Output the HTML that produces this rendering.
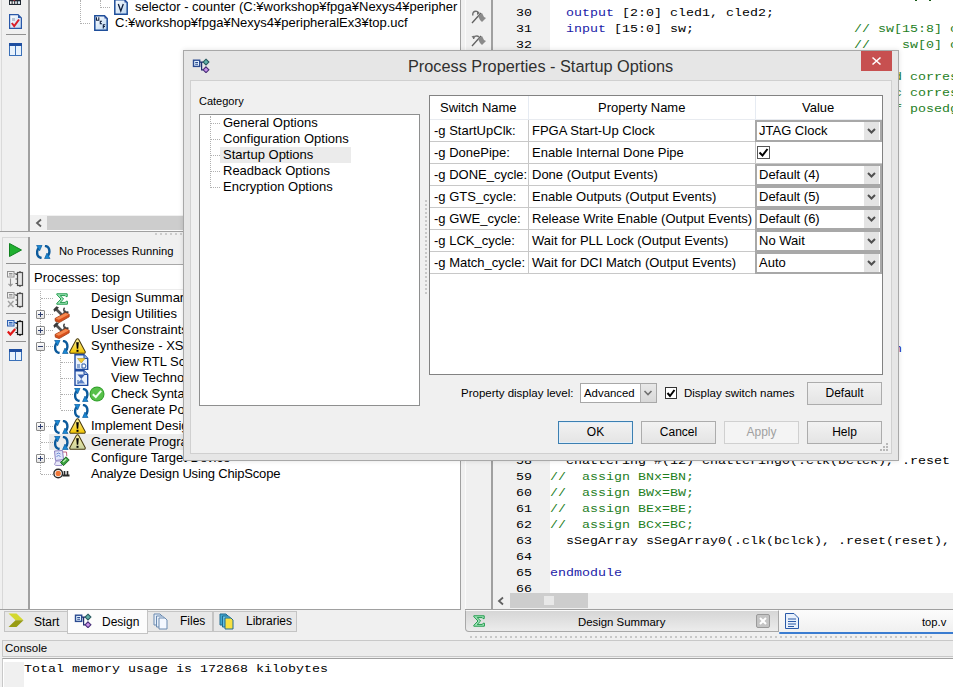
<!DOCTYPE html>
<html><head><meta charset="utf-8">
<style>
*{margin:0;padding:0;box-sizing:border-box}
html,body{width:953px;height:687px;overflow:hidden;background:#f0f0f0;font-family:"Liberation Sans",sans-serif;font-size:13px;color:#000}
.a{position:absolute}
.t{position:absolute;white-space:nowrap;line-height:16px}
.m{position:absolute;white-space:pre;font-family:"Liberation Mono",monospace;font-size:13.33px;line-height:16px;transform:scaleY(0.86);transform-origin:0 11.6px}
.g{color:#1e7e1e}
.k{color:#1c1ca8}
</style></head><body>

<div class="a" style="left:0px;top:0px;width:461px;height:232px;background:#f0f0f0"></div>
<div class="a" style="left:1px;top:0px;width:1px;height:232px;background:#dadada"></div>
<div class="a" style="left:28px;top:0px;width:2px;height:231px;background:#a0a0a0"></div>
<div class="a" style="left:30px;top:0px;width:430px;height:215px;background:#fff"></div>
<div class="a" style="left:460px;top:0px;width:1px;height:610px;background:#a0a0a0"></div>
<div class="a" style="left:30px;top:215px;width:430px;height:16px;background:#f0f0f0"></div>
<div class="a" style="left:47px;top:216px;width:413px;height:15px;background:#cdcdcd"></div>
<svg class="a" style="left:34px;top:218px" width="10" height="10" viewBox="0 0 10 10"><path d="M7 1.5 L3 5 L7 8.5" fill="none" stroke="#606060" stroke-width="1.8"/></svg>
<div class="a" style="left:0px;top:231px;width:461px;height:1px;background:#a0a0a0"></div>
<svg class="a" style="left:9px;top:0px" width="12" height="5" viewBox="0 0 12 5"><rect x="0" y="0" width="12" height="5" fill="#1e2630"/><rect x="1" y="1.3" width="1.6" height="2.6" fill="#f4f4f4"/><rect x="3.6" y="1.3" width="1.6" height="2.6" fill="#f4f4f4"/><rect x="6.2" y="1.3" width="1.6" height="2.6" fill="#f4f4f4"/><rect x="8.8" y="1.3" width="2.2" height="2.6" fill="#d8ecfa"/><rect x="4.5" y="0" width="1.5" height="1" fill="#a02030"/></svg>
<svg class="a" style="left:9px;top:14px" width="13" height="15" viewBox="0 0 13 15"><defs><linearGradient id="dc" x1="0" y1="0" x2="1" y2="1"><stop offset="0" stop-color="#ffffff"/><stop offset="1" stop-color="#c0d8f4"/></linearGradient></defs><path d="M0.6 0.6 L9 0.6 L12.4 4 L12.4 14.4 L0.6 14.4 Z" fill="url(#dc)" stroke="#2a58a8" stroke-width="1.2"/><path d="M9 0.6 L12.4 4 L9 4 Z" fill="#2a58a8"/><rect x="3" y="4" width="3" height="3" fill="#b8c4d4"/><path d="M2.8 9 L5.2 12 L10 5.5" fill="none" stroke="#d81e2a" stroke-width="2"/></svg>
<div class="a" style="left:6px;top:34px;width:20px;height:1px;background:#909090"></div>
<svg class="a" style="left:9px;top:43px" width="13" height="13" viewBox="0 0 13 13"><rect x="0.5" y="0.5" width="12" height="12" fill="#e8f2fc" stroke="#3a70b8"/><rect x="0" y="0" width="13" height="3" fill="#1e4ea0"/><rect x="6" y="3" width="1" height="10" fill="#3a70b8"/></svg>
<div class="a" style="left:80px;top:0px;width:1px;height:24px;border-left:1px dotted #b0b0b0"></div>
<div class="a" style="left:80px;top:23px;width:10px;height:1px;border-top:1px dotted #b0b0b0"></div>
<div class="a" style="left:100px;top:0px;width:1px;height:8px;border-left:1px dotted #b0b0b0"></div>
<div class="a" style="left:100px;top:7px;width:10px;height:1px;border-top:1px dotted #b0b0b0"></div>
<svg class="a" style="left:114px;top:-1px" width="14" height="16" viewBox="0 0 14 16"><defs><linearGradient id="dg" x1="0" y1="0" x2="1" y2="1"><stop offset="0" stop-color="#ffffff"/><stop offset="1" stop-color="#b8d4f0"/></linearGradient></defs><path d="M0.8 0.8 L10.5 0.8 L13.2 3.5 L13.2 15.2 L0.8 15.2 Z" fill="url(#dg)" stroke="#1e4e9a" stroke-width="1.5"/><path d="M10.5 0.8 L13.2 3.5 L10.5 3.5 Z" fill="#3050a0"/><path d="M4.3 5 L6.8 12 L9.3 5" fill="none" stroke="#102040" stroke-width="1.3"/></svg>
<svg class="a" style="left:94px;top:15px" width="14" height="16" viewBox="0 0 14 16"><path d="M0.8 0.8 L10.5 0.8 L13.2 3.5 L13.2 15.2 L0.8 15.2 Z" fill="url(#dg)" stroke="#1e4e9a" stroke-width="1.5"/><path d="M10.5 0.8 L13.2 3.5 L10.5 3.5 Z" fill="#3050a0"/><path d="M2.5 2.3 V5.3 H4.8 V2.3 M8 6.2 H6.3 V8.8 H8 M11.3 9.8 H9.3 V13.5 M9.3 11.5 H11" fill="none" stroke="#102040" stroke-width="1.1"/></svg>
<div class="t" style="left:135px;top:-1px;">selector - counter (C:¥workshop¥fpga¥Nexys4¥peripher</div>
<div class="t" style="left:115px;top:15px;">C:¥workshop¥fpga¥Nexys4¥peripheralEx3¥top.ucf</div>
<div class="a" style="left:460px;top:0px;width:1px;height:232px;background:#a0a0a0"></div>
<div class="a" style="left:2px;top:237px;width:27px;height:372px;background:#f0f0f0;border-left:1px solid #d8d8d8;border-top:1px solid #d8d8d8"></div>
<div class="a" style="left:28px;top:237px;width:2px;height:372px;background:#a0a0a0"></div>
<div class="a" style="left:30px;top:237px;width:430px;height:28px;background:#f0f0f0;border-bottom:1px solid #a8a8a8"></div>
<div class="a" style="left:30px;top:230px;width:430px;height:1px;background:#fafafa"></div>
<div class="a" style="left:155px;top:233px;width:2px;height:2px;background:#cccccc"></div>
<div class="a" style="left:160px;top:233px;width:2px;height:2px;background:#cccccc"></div>
<div class="a" style="left:165px;top:233px;width:2px;height:2px;background:#cccccc"></div>
<div class="a" style="left:170px;top:233px;width:2px;height:2px;background:#cccccc"></div>
<div class="a" style="left:175px;top:233px;width:2px;height:2px;background:#cccccc"></div>
<div class="a" style="left:180px;top:233px;width:2px;height:2px;background:#cccccc"></div>
<div class="a" style="left:185px;top:233px;width:2px;height:2px;background:#cccccc"></div>
<div class="a" style="left:190px;top:233px;width:2px;height:2px;background:#cccccc"></div>
<div class="a" style="left:195px;top:233px;width:2px;height:2px;background:#cccccc"></div>
<div class="a" style="left:200px;top:233px;width:2px;height:2px;background:#cccccc"></div>
<div class="a" style="left:205px;top:233px;width:2px;height:2px;background:#cccccc"></div>
<div class="a" style="left:210px;top:233px;width:2px;height:2px;background:#cccccc"></div>
<div class="a" style="left:30px;top:265px;width:430px;height:344px;background:#fff"></div>
<div class="a" style="left:0px;top:609px;width:461px;height:1px;background:#a0a0a0"></div>
<svg class="a" style="left:36px;top:245px" width="15" height="14" viewBox="0 0 15 14"><path d="M5.6 13 Q0.9 12.3 1.1 7 Q1.3 4.2 2.8 3" fill="none" stroke="#0c5a9c" stroke-width="2.4"/><path d="M0.6 0.3 L6 0.3 L3.6 5.8 Z" fill="#1a88d4" stroke="#0c5a9c" stroke-width="0.7"/><path d="M8.9 0.9 Q13.6 1.6 13.4 6.8 Q13.2 9.6 11.8 10.8" fill="none" stroke="#0c5a9c" stroke-width="2.4"/><path d="M14 13.6 L8.6 13.6 L11 8.1 Z" fill="#1a88d4" stroke="#0c5a9c" stroke-width="0.7"/></svg>
<div class="t" style="left:59px;top:242px;font-size:11.2px;line-height:18px">No Processes Running</div>
<div class="t" style="left:34px;top:270px;">Processes: top</div>
<div class="a" style="left:30px;top:289px;width:430px;height:1px;background:#ececec"></div>
<svg class="a" style="left:9px;top:243px" width="13" height="14" viewBox="0 0 13 14"><path d="M0.5 0.5 L12.5 7 L0.5 13.5 Z" fill="#20b030" stroke="#108020"/></svg>
<div class="a" style="left:6px;top:263px;width:20px;height:1px;background:#909090"></div>
<div class="a" style="left:6px;top:313px;width:20px;height:1px;background:#909090"></div>
<div class="a" style="left:6px;top:341px;width:20px;height:1px;background:#909090"></div>
<svg class="a" style="left:7px;top:271px" width="17" height="16" viewBox="0 0 17 16"><rect x="0.5" y="0.5" width="6.5" height="5.5" fill="#f0f0f0" stroke="#909090"/><path d="M2 2.5h3.5M2 4h3.5M7 2.5h3" stroke="#909090"/><rect x="10.5" y="1.5" width="5" height="13" fill="#e6e6e6" stroke="#505050" stroke-width="1.2"/><path d="M8.5 3.5h2M8.5 8h2M8.5 12.5h2M13 0v1.5M13 14.5v1.5" stroke="#505050" stroke-width="1.2"/><path d="M3.5 7.5v7.5M1.5 12.8l2 2.2 2-2.2" fill="none" stroke="#909090" stroke-width="1.1"/></svg>
<svg class="a" style="left:7px;top:292px" width="17" height="16" viewBox="0 0 17 16"><rect x="0.5" y="0.5" width="6.5" height="5.5" fill="#f0f0f0" stroke="#909090"/><path d="M2 2.5h3.5M2 4h3.5M7 2.5h3" stroke="#909090"/><rect x="10.5" y="1.5" width="5" height="13" fill="#e6e6e6" stroke="#505050" stroke-width="1.2"/><path d="M8.5 3.5h2M8.5 8h2M8.5 12.5h2M13 0v1.5M13 14.5v1.5" stroke="#505050" stroke-width="1.2"/><path d="M1 9l5.5 6M6.5 9l-5.5 6" fill="none" stroke="#a0a0a0" stroke-width="1.4"/></svg>
<svg class="a" style="left:7px;top:320px" width="17" height="16" viewBox="0 0 17 16"><rect x="0.5" y="0.5" width="6.5" height="5.5" fill="#cfe0f8" stroke="#2f60b0"/><path d="M2 2.5h3.5M2 4h3.5M7 2.5h3" stroke="#2f60b0"/><rect x="10.5" y="1.5" width="5" height="13" fill="#e6e6e6" stroke="#1a1a1a" stroke-width="1.2"/><path d="M8.5 3.5h2M8.5 8h2M8.5 12.5h2M13 0v1.5M13 14.5v1.5" stroke="#1a1a1a" stroke-width="1.2"/><path d="M0.8 11.5l2.6 3 4.8-5.5" fill="none" stroke="#e01818" stroke-width="2.2"/></svg>
<svg class="a" style="left:9px;top:349px" width="13" height="12" viewBox="0 0 13 12"><rect x="0.5" y="0.5" width="12" height="11" fill="#e8f2fc" stroke="#3a70b8"/><rect x="0" y="0" width="13" height="3" fill="#1e4ea0"/><rect x="6" y="3" width="1" height="9" fill="#3a70b8"/></svg>
<div class="a" style="left:49px;top:434px;width:134px;height:16px;background:#ececec"></div>
<div class="a" style="left:40px;top:291px;width:1px;height:183px;border-left:1px dotted #b0b0b0"></div>
<div class="a" style="left:60px;top:356px;width:1px;height:53px;border-left:1px dotted #b0b0b0"></div>
<div class="a" style="left:41px;top:298px;width:12px;height:1px;border-top:1px dotted #b0b0b0"></div>
<div class="t" style="left:91px;top:290px;">Design Summary</div>
<div class="a" style="left:41px;top:314px;width:12px;height:1px;border-top:1px dotted #b0b0b0"></div>
<div class="a" style="left:36px;top:310px;width:9px;height:9px;background:linear-gradient(#fdfdfd,#e4e4e4);border:1px solid #8a8a8a;border-radius:1px"></div>
<div class="a" style="left:38px;top:314px;width:5px;height:1px;background:#304070"></div>
<div class="a" style="left:40px;top:312px;width:1px;height:5px;background:#304070"></div>
<div class="t" style="left:91px;top:306px;">Design Utilities</div>
<div class="a" style="left:41px;top:330px;width:12px;height:1px;border-top:1px dotted #b0b0b0"></div>
<div class="a" style="left:36px;top:326px;width:9px;height:9px;background:linear-gradient(#fdfdfd,#e4e4e4);border:1px solid #8a8a8a;border-radius:1px"></div>
<div class="a" style="left:38px;top:330px;width:5px;height:1px;background:#304070"></div>
<div class="a" style="left:40px;top:328px;width:1px;height:5px;background:#304070"></div>
<div class="t" style="left:91px;top:322px;">User Constraints</div>
<div class="a" style="left:41px;top:346px;width:12px;height:1px;border-top:1px dotted #b0b0b0"></div>
<div class="a" style="left:36px;top:342px;width:9px;height:9px;background:linear-gradient(#fdfdfd,#e4e4e4);border:1px solid #8a8a8a;border-radius:1px"></div>
<div class="a" style="left:38px;top:346px;width:5px;height:1px;background:#304070"></div>
<div class="t" style="left:91px;top:338px;">Synthesize - XST</div>
<div class="a" style="left:61px;top:362px;width:12px;height:1px;border-top:1px dotted #b0b0b0"></div>
<div class="t" style="left:111px;top:354px;">View RTL Schematic</div>
<div class="a" style="left:61px;top:378px;width:12px;height:1px;border-top:1px dotted #b0b0b0"></div>
<div class="t" style="left:111px;top:370px;">View Technology Schematic</div>
<div class="a" style="left:61px;top:394px;width:12px;height:1px;border-top:1px dotted #b0b0b0"></div>
<div class="t" style="left:111px;top:386px;">Check Syntax</div>
<div class="a" style="left:61px;top:410px;width:12px;height:1px;border-top:1px dotted #b0b0b0"></div>
<div class="t" style="left:111px;top:402px;">Generate Post-Synthesis Simulation Model</div>
<div class="a" style="left:41px;top:426px;width:12px;height:1px;border-top:1px dotted #b0b0b0"></div>
<div class="a" style="left:36px;top:422px;width:9px;height:9px;background:linear-gradient(#fdfdfd,#e4e4e4);border:1px solid #8a8a8a;border-radius:1px"></div>
<div class="a" style="left:38px;top:426px;width:5px;height:1px;background:#304070"></div>
<div class="a" style="left:40px;top:424px;width:1px;height:5px;background:#304070"></div>
<div class="t" style="left:91px;top:418px;">Implement Design</div>
<div class="a" style="left:41px;top:442px;width:12px;height:1px;border-top:1px dotted #b0b0b0"></div>
<div class="t" style="left:91px;top:434px;">Generate Programming File</div>
<div class="a" style="left:41px;top:458px;width:12px;height:1px;border-top:1px dotted #b0b0b0"></div>
<div class="a" style="left:36px;top:454px;width:9px;height:9px;background:linear-gradient(#fdfdfd,#e4e4e4);border:1px solid #8a8a8a;border-radius:1px"></div>
<div class="a" style="left:38px;top:458px;width:5px;height:1px;background:#304070"></div>
<div class="a" style="left:40px;top:456px;width:1px;height:5px;background:#304070"></div>
<div class="t" style="left:91px;top:450px;">Configure Target Device</div>
<div class="a" style="left:41px;top:474px;width:12px;height:1px;border-top:1px dotted #b0b0b0"></div>
<div class="t" style="left:91px;top:466px;letter-spacing:-0.17px">Analyze Design Using ChipScope</div>
<svg class="a" style="left:56px;top:293px" width="12" height="12" viewBox="0 0 12 12"><path d="M0.8 0.8 L11.2 0.8 L11.2 3.6 L10 3.6 L9.2 2.6 L4.2 2.6 L7.6 6 L4.2 9.4 L9.4 9.4 L10.2 8.2 L11.4 8.2 L11.4 11.2 L0.8 11.2 L0.8 10.4 L5 6 L0.8 1.6 Z" fill="#a8e8c0" stroke="#1f9a4a" stroke-width="1"/></svg>
<svg class="a" style="left:53px;top:306px" width="17" height="17" viewBox="0 0 17 17"><path d="M2.5 2.5 L10 10" stroke="#505050" stroke-width="2.6"/><path d="M0.3 3.5 L3.5 0.3 L6 1.5 L1.5 6 Z" fill="#3a3a3a"/><path d="M9.5 9 L13 5" stroke="#585858" stroke-width="2"/><path d="M11.6 1.8 A2.6 2.6 0 1 0 15.4 5.6" fill="none" stroke="#404040" stroke-width="1.6"/><path d="M2 12.5 L12.5 6.8 L16.2 8.2 L16.2 10.8 L6.2 16.6 L2.4 15.2 Z" fill="#d8501c" stroke="#a03a10" stroke-width="0.8"/><path d="M2.6 12.4 L12.5 7 L15.8 8.4 L5.8 13.8 Z" fill="#f58a50"/></svg>
<svg class="a" style="left:53px;top:322px" width="17" height="17" viewBox="0 0 17 17"><path d="M2.5 2.5 L10 10" stroke="#505050" stroke-width="2.6"/><path d="M0.3 3.5 L3.5 0.3 L6 1.5 L1.5 6 Z" fill="#3a3a3a"/><path d="M9.5 9 L13 5" stroke="#585858" stroke-width="2"/><path d="M11.6 1.8 A2.6 2.6 0 1 0 15.4 5.6" fill="none" stroke="#404040" stroke-width="1.6"/><path d="M2 12.5 L12.5 6.8 L16.2 8.2 L16.2 10.8 L6.2 16.6 L2.4 15.2 Z" fill="#d8501c" stroke="#a03a10" stroke-width="0.8"/><path d="M2.6 12.4 L12.5 7 L15.8 8.4 L5.8 13.8 Z" fill="#f58a50"/></svg>
<svg class="a" style="left:54px;top:340px" width="15" height="14" viewBox="0 0 15 14"><path d="M5.6 13 Q0.9 12.3 1.1 7 Q1.3 4.2 2.8 3" fill="none" stroke="#0c5a9c" stroke-width="2.4"/><path d="M0.6 0.3 L6 0.3 L3.6 5.8 Z" fill="#1a88d4" stroke="#0c5a9c" stroke-width="0.7"/><path d="M8.9 0.9 Q13.6 1.6 13.4 6.8 Q13.2 9.6 11.8 10.8" fill="none" stroke="#0c5a9c" stroke-width="2.4"/><path d="M14 13.6 L8.6 13.6 L11 8.1 Z" fill="#1a88d4" stroke="#0c5a9c" stroke-width="0.7"/></svg>
<svg class="a" style="left:69px;top:338px" width="17" height="16" viewBox="0 0 17 16"><defs><linearGradient id="wg69338" x1="0" y1="0" x2="0" y2="1"><stop offset="0" stop-color="#fff3a0"/><stop offset="1" stop-color="#f2c400"/></linearGradient></defs><path d="M8.5 0.8 Q9.1 0.6 9.6 1.3 L16.2 13.6 Q16.5 15.2 15 15.2 L2 15.2 Q0.5 15.2 0.8 13.6 L7.4 1.3 Z" fill="url(#wg69338)" stroke="#4a3c10" stroke-width="1.1"/><path d="M7.2 4.2 L9.8 4.2 L9.2 10.8 L7.8 10.8 Z" fill="#000"/><rect x="7.5" y="11.8" width="2" height="2" fill="#000"/></svg>
<svg class="a" style="left:74px;top:354px" width="15" height="16" viewBox="0 0 15 16"><path d="M1 0.8 L10 0.8 L13.7 4.5 L13.7 15.5 L1 15.5 Z" fill="#eaf2fc" stroke="#1e4aa0" stroke-width="1.4"/><path d="M10 0.8 L10 4.5 L13.7 4.5" fill="#9fb8e0" stroke="#1e4aa0"/><path d="M3.5 4.5h7.5l-3.75 4.5z" fill="#f4cc30" stroke="#b09020" stroke-width="0.6"/><path d="M3 11h3M3 13h3M8 10h3l1 2-1 2h-3z" stroke="#2a5aa8" fill="#fff" stroke-width="1"/></svg>
<svg class="a" style="left:74px;top:370px" width="15" height="16" viewBox="0 0 15 16"><path d="M1 0.8 L10 0.8 L13.7 4.5 L13.7 15.5 L1 15.5 Z" fill="#eaf2fc" stroke="#1e4aa0" stroke-width="1.4"/><path d="M10 0.8 L10 4.5 L13.7 4.5" fill="#9fb8e0" stroke="#1e4aa0"/><path d="M3.5 4.5h7.5l-3.75 4.5z" fill="#3a60b0"/><path d="M3.5 13.5h7.5l-3.75-4.5z" fill="#5a80c8"/><path d="M3 11h2M3 13h2" stroke="#2a5aa8"/></svg>
<svg class="a" style="left:74px;top:388px" width="15" height="14" viewBox="0 0 15 14"><path d="M5.6 13 Q0.9 12.3 1.1 7 Q1.3 4.2 2.8 3" fill="none" stroke="#0c5a9c" stroke-width="2.4"/><path d="M0.6 0.3 L6 0.3 L3.6 5.8 Z" fill="#1a88d4" stroke="#0c5a9c" stroke-width="0.7"/><path d="M8.9 0.9 Q13.6 1.6 13.4 6.8 Q13.2 9.6 11.8 10.8" fill="none" stroke="#0c5a9c" stroke-width="2.4"/><path d="M14 13.6 L8.6 13.6 L11 8.1 Z" fill="#1a88d4" stroke="#0c5a9c" stroke-width="0.7"/></svg>
<svg class="a" style="left:89px;top:386px" width="16" height="16" viewBox="0 0 16 16"><circle cx="8" cy="8" r="7.5" fill="#2f9e2a"/><circle cx="8" cy="8" r="6.6" fill="#58c04a"/><path d="M3.8 8.2 L6.8 11 L12.2 4.8" fill="none" stroke="#f0fff0" stroke-width="2"/></svg>
<svg class="a" style="left:74px;top:404px" width="15" height="14" viewBox="0 0 15 14"><path d="M5.6 13 Q0.9 12.3 1.1 7 Q1.3 4.2 2.8 3" fill="none" stroke="#0c5a9c" stroke-width="2.4"/><path d="M0.6 0.3 L6 0.3 L3.6 5.8 Z" fill="#1a88d4" stroke="#0c5a9c" stroke-width="0.7"/><path d="M8.9 0.9 Q13.6 1.6 13.4 6.8 Q13.2 9.6 11.8 10.8" fill="none" stroke="#0c5a9c" stroke-width="2.4"/><path d="M14 13.6 L8.6 13.6 L11 8.1 Z" fill="#1a88d4" stroke="#0c5a9c" stroke-width="0.7"/></svg>
<svg class="a" style="left:54px;top:420px" width="15" height="14" viewBox="0 0 15 14"><path d="M5.6 13 Q0.9 12.3 1.1 7 Q1.3 4.2 2.8 3" fill="none" stroke="#0c5a9c" stroke-width="2.4"/><path d="M0.6 0.3 L6 0.3 L3.6 5.8 Z" fill="#1a88d4" stroke="#0c5a9c" stroke-width="0.7"/><path d="M8.9 0.9 Q13.6 1.6 13.4 6.8 Q13.2 9.6 11.8 10.8" fill="none" stroke="#0c5a9c" stroke-width="2.4"/><path d="M14 13.6 L8.6 13.6 L11 8.1 Z" fill="#1a88d4" stroke="#0c5a9c" stroke-width="0.7"/></svg>
<svg class="a" style="left:69px;top:418px" width="17" height="16" viewBox="0 0 17 16"><defs><linearGradient id="wg69418" x1="0" y1="0" x2="0" y2="1"><stop offset="0" stop-color="#fff3a0"/><stop offset="1" stop-color="#f2c400"/></linearGradient></defs><path d="M8.5 0.8 Q9.1 0.6 9.6 1.3 L16.2 13.6 Q16.5 15.2 15 15.2 L2 15.2 Q0.5 15.2 0.8 13.6 L7.4 1.3 Z" fill="url(#wg69418)" stroke="#4a3c10" stroke-width="1.1"/><path d="M7.2 4.2 L9.8 4.2 L9.2 10.8 L7.8 10.8 Z" fill="#000"/><rect x="7.5" y="11.8" width="2" height="2" fill="#000"/></svg>
<svg class="a" style="left:54px;top:436px" width="15" height="14" viewBox="0 0 15 14"><path d="M5.6 13 Q0.9 12.3 1.1 7 Q1.3 4.2 2.8 3" fill="none" stroke="#0c5a9c" stroke-width="2.4"/><path d="M0.6 0.3 L6 0.3 L3.6 5.8 Z" fill="#1a88d4" stroke="#0c5a9c" stroke-width="0.7"/><path d="M8.9 0.9 Q13.6 1.6 13.4 6.8 Q13.2 9.6 11.8 10.8" fill="none" stroke="#0c5a9c" stroke-width="2.4"/><path d="M14 13.6 L8.6 13.6 L11 8.1 Z" fill="#1a88d4" stroke="#0c5a9c" stroke-width="0.7"/></svg>
<svg class="a" style="left:69px;top:434px" width="17" height="16" viewBox="0 0 17 16"><defs><linearGradient id="wg69434" x1="0" y1="0" x2="0" y2="1"><stop offset="0" stop-color="#fff3a0"/><stop offset="1" stop-color="#c8d0a0"/></linearGradient></defs><path d="M8.5 0.8 Q9.1 0.6 9.6 1.3 L16.2 13.6 Q16.5 15.2 15 15.2 L2 15.2 Q0.5 15.2 0.8 13.6 L7.4 1.3 Z" fill="url(#wg69434)" stroke="#4a3c10" stroke-width="1.1"/><path d="M7.2 4.2 L9.8 4.2 L9.2 10.8 L7.8 10.8 Z" fill="#000"/><rect x="7.5" y="11.8" width="2" height="2" fill="#000"/></svg>
<svg class="a" style="left:53px;top:450px" width="17" height="16" viewBox="0 0 17 16"><path d="M1.5 1 L9.5 0.5 L10.5 9.5 L2.5 10.5 Z" fill="#dfe4fa" stroke="#8a80c0"/><path d="M3.5 4l2-1 2 1M3.5 6.5l2-1 2 1" fill="none" stroke="#6a8ad0"/><path d="M3 11 L1.5 14.5 Q2 15.5 4 15.5 L9 15.5 L8 11 Z" fill="#e8e8f8" stroke="#9a90c8"/><path d="M10 2 L13.5 2 L13.8 6" fill="none" stroke="#c06080"/><path d="M7.5 12.5 L13 6.8 L16.2 10 L10.6 15.6 Z" fill="#3aa040" stroke="#1e6a24"/><path d="M10 12 L13.2 9" stroke="#b8f0b0" stroke-width="1.2"/></svg>
<svg class="a" style="left:53px;top:468px" width="17" height="12" viewBox="0 0 17 12"><circle cx="5.2" cy="5.5" r="4.3" fill="#fff" stroke="#2a2a2a" stroke-width="1.4"/><circle cx="5.2" cy="5.5" r="2.7" fill="#f07838"/><path d="M9.5 7.5h7" stroke="#2a2a2a" stroke-width="2"/><path d="M11.5 3v4M14.5 3v4" stroke="#2a2a2a" stroke-width="1.6"/></svg>
<div class="a" style="left:461px;top:0px;width:492px;height:610px;background:#f0f0f0"></div>
<div class="a" style="left:465px;top:0px;width:1px;height:609px;background:#fafafa"></div>
<div class="a" style="left:491px;top:0px;width:2px;height:609px;background:#a0a0a0"></div>
<div class="a" style="left:493px;top:0px;width:57px;height:593px;background:#f0f0f0"></div>
<div class="a" style="left:550px;top:0px;width:403px;height:593px;background:#fff"></div>
<svg class="a" style="left:471px;top:10px" width="16" height="14" viewBox="0 0 16 14"><path d="M1 13 L10 3" stroke="#606060" stroke-width="1.3"/><path d="M7 6 L11 3 L13 7 L15 8 L11 12 L9 10 Z" fill="#8a8a8a"/><path d="M2 5.5 A3 3 0 0 1 7.5 3" fill="none" stroke="#707070" stroke-width="1.4"/><path d="M6 1 L9 3 L6 5 Z" fill="#707070"/></svg>
<svg class="a" style="left:471px;top:33px" width="16" height="14" viewBox="0 0 16 14"><path d="M1 13 L10 3" stroke="#606060" stroke-width="1.3"/><path d="M7 6 L11 3 L13 7 L15 8 L11 12 L9 10 Z" fill="#8a8a8a"/><path d="M2.5 6 A3.2 3.2 0 0 1 8 4" fill="none" stroke="#707070" stroke-width="1.4"/><path d="M0.5 3.5 L3.5 2.5 L3 6 Z" fill="#707070"/></svg>
<div class="a" style="left:493px;top:593px;width:460px;height:15px;background:#f0f0f0"></div>
<svg class="a" style="left:496px;top:596px" width="10" height="10" viewBox="0 0 10 10"><path d="M7 1.5 L3 5 L7 8.5" fill="none" stroke="#606060" stroke-width="1.8"/></svg>
<div class="a" style="left:510px;top:593px;width:78px;height:15px;background:#cdcdcd"></div>
<div class="a" style="left:544px;top:596px;width:10px;height:9px;background:#e8e8e8"></div>
<div class="m" style="left:508px;top:5px;width:24px;text-align:right">30</div>
<div class="m" style="left:550px;top:5px">  <span class="k">output</span> [2:0] cled1, cled2;</div>
<div class="m" style="left:508px;top:21px;width:24px;text-align:right">31</div>
<div class="m" style="left:550px;top:21px">  <span class="k">input</span> [15:0] sw;                    <span class="g">// sw[15:8] corresponds to</span></div>
<div class="m" style="left:508px;top:37px;width:24px;text-align:right">32</div>
<div class="m" style="left:550px;top:37px">                                      <span class="g">//    sw[0] corresponds</span></div>
<div class="m" style="left:508px;top:53px;width:24px;text-align:right">33</div>
<div class="m" style="left:508px;top:69px;width:24px;text-align:right">34</div>
<div class="m" style="left:550px;top:69px">                                           <span class="g">d corresponds</span></div>
<div class="m" style="left:508px;top:85px;width:24px;text-align:right">35</div>
<div class="m" style="left:550px;top:85px">                                           <span class="g">c corresponds</span></div>
<div class="m" style="left:508px;top:101px;width:24px;text-align:right">36</div>
<div class="m" style="left:550px;top:101px">                                           <span class="g">f posedge</span></div>
<div class="m" style="left:508px;top:117px;width:24px;text-align:right">37</div>
<div class="m" style="left:508px;top:133px;width:24px;text-align:right">38</div>
<div class="m" style="left:508px;top:149px;width:24px;text-align:right">39</div>
<div class="m" style="left:508px;top:165px;width:24px;text-align:right">40</div>
<div class="m" style="left:508px;top:181px;width:24px;text-align:right">41</div>
<div class="m" style="left:508px;top:197px;width:24px;text-align:right">42</div>
<div class="m" style="left:508px;top:213px;width:24px;text-align:right">43</div>
<div class="m" style="left:508px;top:229px;width:24px;text-align:right">44</div>
<div class="m" style="left:508px;top:245px;width:24px;text-align:right">45</div>
<div class="m" style="left:508px;top:261px;width:24px;text-align:right">46</div>
<div class="m" style="left:508px;top:277px;width:24px;text-align:right">47</div>
<div class="m" style="left:508px;top:293px;width:24px;text-align:right">48</div>
<div class="m" style="left:508px;top:309px;width:24px;text-align:right">49</div>
<div class="m" style="left:508px;top:325px;width:24px;text-align:right">50</div>
<div class="m" style="left:508px;top:341px;width:24px;text-align:right">51</div>
<div class="m" style="left:550px;top:341px">                                       <span class="k">begin</span></div>
<div class="m" style="left:508px;top:357px;width:24px;text-align:right">52</div>
<div class="m" style="left:508px;top:373px;width:24px;text-align:right">53</div>
<div class="m" style="left:508px;top:389px;width:24px;text-align:right">54</div>
<div class="m" style="left:508px;top:405px;width:24px;text-align:right">55</div>
<div class="m" style="left:508px;top:421px;width:24px;text-align:right">56</div>
<div class="m" style="left:508px;top:437px;width:24px;text-align:right">57</div>
<div class="m" style="left:508px;top:453px;width:24px;text-align:right">58</div>
<div class="m" style="left:550px;top:453px">  chattering #(12) chattering0(.clk(bclck), .reset</div>
<div class="m" style="left:508px;top:469px;width:24px;text-align:right">59</div>
<div class="m" style="left:550px;top:469px"><span class="g">//  assign BNx=BN;</span></div>
<div class="m" style="left:508px;top:485px;width:24px;text-align:right">60</div>
<div class="m" style="left:550px;top:485px"><span class="g">//  assign BWx=BW;</span></div>
<div class="m" style="left:508px;top:501px;width:24px;text-align:right">61</div>
<div class="m" style="left:550px;top:501px"><span class="g">//  assign BEx=BE;</span></div>
<div class="m" style="left:508px;top:517px;width:24px;text-align:right">62</div>
<div class="m" style="left:550px;top:517px"><span class="g">//  assign BCx=BC;</span></div>
<div class="m" style="left:508px;top:533px;width:24px;text-align:right">63</div>
<div class="m" style="left:550px;top:533px">  sSegArray sSegArray0(.clk(bclck), .reset(reset), .din(x))</div>
<div class="m" style="left:508px;top:549px;width:24px;text-align:right">64</div>
<div class="m" style="left:508px;top:565px;width:24px;text-align:right">65</div>
<div class="m" style="left:550px;top:565px"><span class="k">endmodule</span></div>
<div class="m" style="left:508px;top:581px;width:24px;text-align:right">66</div>
<div class="a" style="left:915px;top:0px;width:2px;height:1px;background:#1a5a1a"></div>
<div class="a" style="left:929px;top:0px;width:2px;height:1px;background:#1a5a1a"></div>
<div class="a" style="left:493px;top:593px;width:460px;height:15px;background:#f0f0f0"></div>
<svg class="a" style="left:496px;top:596px" width="10" height="10" viewBox="0 0 10 10"><path d="M7 1.5 L3 5 L7 8.5" fill="none" stroke="#606060" stroke-width="1.8"/></svg>
<div class="a" style="left:510px;top:593px;width:78px;height:15px;background:#cdcdcd"></div>
<div class="a" style="left:544px;top:596px;width:10px;height:9px;background:#e8e8e8"></div>
<div class="a" style="left:0px;top:609px;width:953px;height:31px;background:#f0f0f0"></div>
<div class="a" style="left:0px;top:609px;width:461px;height:1px;background:#a0a0a0"></div>
<div class="a" style="left:465px;top:609px;width:488px;height:1px;background:#a0a0a0"></div>
<div class="a" style="left:4px;top:611px;width:64px;height:21px;background:#e8e8e8;border:1px solid #c4c4c4"></div>
<div class="a" style="left:67px;top:610px;width:81px;height:24px;background:#fcfcfc;border:1px solid #c4c4c4;border-top:none"></div>
<div class="a" style="left:147px;top:611px;width:66px;height:21px;background:#e8e8e8;border:1px solid #c4c4c4"></div>
<div class="a" style="left:213px;top:611px;width:84px;height:21px;background:#e8e8e8;border:1px solid #c4c4c4"></div>
<svg class="a" style="left:8px;top:613px" width="17" height="15" viewBox="0 0 17 15"><path d="M0.5 0.5 L8.5 0.5 L15.5 7.2 L7.5 7.2 Z" fill="#d4d830"/><path d="M7.5 7.2 L15.5 7.2 L8.5 14 L0.5 14 Z" fill="#989c14"/></svg>
<div class="t" style="left:34px;top:614px;font-size:12px">Start</div>
<svg class="a" style="left:74px;top:613px" width="18" height="15" viewBox="0 0 18 15"><rect x="1.5" y="2.2" width="6.2" height="6.2" fill="#e0f0fe" stroke="#2a4a90" stroke-width="1.4"/><path d="M3.2 4.5h2.8M3.2 6.3h2.8" stroke="#2a4a90" stroke-width="1.1"/><path d="M7.8 4.2 H11.5 M9.6 4.2 V11.8 H11.5" fill="none" stroke="#203070" stroke-width="1.2"/><path d="M14 1.2 L16.9 4.1 L14 7 L11.1 4.1 Z" fill="#60b0a8" stroke="#2a5a60" stroke-width="1.1"/><path d="M14 8.9 L16.9 11.8 L14 14.7 L11.1 11.8 Z" fill="#c890e8" stroke="#483078" stroke-width="1.1"/></svg>
<div class="t" style="left:102px;top:614px;font-size:12px">Design</div>
<svg class="a" style="left:153px;top:613px" width="16" height="17" viewBox="0 0 16 17"><path d="M1 1h6l2 2v9H1z" fill="#e8f0fa" stroke="#6a8ab0"/><path d="M3.5 3h6l2 2v9h-8z" fill="#e8f0fa" stroke="#6a8ab0"/><path d="M6 5h6l2 2v9H6z" fill="#f4f8ff" stroke="#6a8ab0"/></svg>
<div class="t" style="left:180px;top:613px;font-size:12px">Files</div>
<svg class="a" style="left:219px;top:613px" width="16" height="17" viewBox="0 0 16 17"><path d="M1 1h6l2 2v9H1z" fill="#40a8d0" stroke="#206a90"/><path d="M3.5 3h6l2 2v9h-8z" fill="#60c0e0" stroke="#206a90"/><path d="M6 5h6l2 2v9H6z" fill="#f8e040" stroke="#206a90"/></svg>
<div class="t" style="left:246px;top:613px;font-size:12px">Libraries</div>
<div class="a" style="left:465px;top:610px;width:314px;height:22px;background:linear-gradient(#d6d6d6,#ececec);border:1px solid #a8a8a8;border-top:1px solid #fafafa;border-radius:0 0 0 4px"></div>
<div class="a" style="left:779px;top:610px;width:174px;height:22px;background:linear-gradient(#fcfcfc,#f0f0f0)"></div>
<div class="a" style="left:779px;top:632px;width:174px;height:2px;background:#3a7cd0;border-radius:2px 0 0 2px"></div>
<svg class="a" style="left:473px;top:615px" width="12" height="12" viewBox="0 0 12 12"><path d="M0.8 0.8 L11.2 0.8 L11.2 3.6 L10 3.6 L9.2 2.6 L4.2 2.6 L7.6 6 L4.2 9.4 L9.4 9.4 L10.2 8.2 L11.4 8.2 L11.4 11.2 L0.8 11.2 L0.8 10.4 L5 6 L0.8 1.6 Z" fill="#a8e8c0" stroke="#1f9a4a" stroke-width="1"/></svg>
<div class="t" style="left:578px;top:614px;font-size:11.4px">Design Summary</div>
<div class="a" style="left:756px;top:614px;width:14px;height:14px;background:#c4c4c4;border:1px solid #9a9a9a;border-radius:2px"></div>
<svg class="a" style="left:756px;top:614px" width="14" height="14" viewBox="0 0 14 14"><path d="M4 4l6 6M10 4l-6 6" stroke="#fff" stroke-width="2"/></svg>
<svg class="a" style="left:784px;top:613px" width="16" height="16" viewBox="0 0 16 16"><path d="M1.5 0.5 L10 0.5 L14.5 5 L14.5 15.5 L1.5 15.5 Z" fill="#e8f0fb" stroke="#2a5aa8"/><path d="M4 6h8M4 8.5h8M4 11h8M4 13.5h6" stroke="#2a5aa8"/></svg>
<div class="t" style="left:922px;top:614px;font-size:11.2px">top.v</div>
<div class="a" style="left:470px;top:636px;width:462px;height:2px;background:repeating-linear-gradient(90deg,#c8c8c8 0 2px,transparent 2px 5px)"></div>
<div class="a" style="left:2px;top:640px;width:960px;height:17px;background:#ececec;border:1px solid #c8c8c8"></div>
<div class="t" style="left:5px;top:640px;font-size:11.5px">Console</div>
<div class="a" style="left:2px;top:658px;width:951px;height:29px;background:#fff;border-top:1px solid #a0a0a0;border-left:1px solid #c8c8c8"></div>
<div class="a" style="left:4px;top:662px;width:20px;height:25px;background:#f0f0f0"></div>
<div class="m" style="left:24px;top:661px">Total memory usage is 172868 kilobytes</div>
<div class="a" style="left:183px;top:50px;width:716px;height:411px;background:#e6e6e6;border:1px solid #a8a8a8;box-shadow:0 0 5px rgba(0,0,0,0.12)"></div>
<div class="a" style="left:190px;top:80px;width:702px;height:374px;background:#f0f0f0;border:1px solid #d0d0d0"></div>
<svg class="a" style="left:192px;top:58px" width="18" height="15" viewBox="0 0 18 15"><rect x="1.5" y="2.2" width="6.2" height="6.2" fill="#e0f0fe" stroke="#2a4a90" stroke-width="1.4"/><path d="M3.2 4.5h2.8M3.2 6.3h2.8" stroke="#2a4a90" stroke-width="1.1"/><path d="M7.8 4.2 H11.5 M9.6 4.2 V11.8 H11.5" fill="none" stroke="#203070" stroke-width="1.2"/><path d="M14 1.2 L16.9 4.1 L14 7 L11.1 4.1 Z" fill="#60b0a8" stroke="#2a5a60" stroke-width="1.1"/><path d="M14 8.9 L16.9 11.8 L14 14.7 L11.1 11.8 Z" fill="#c890e8" stroke="#483078" stroke-width="1.1"/></svg>
<div class="t" style="left:408px;top:56px;font-size:16.3px;line-height:20px;color:#303030">Process Properties - Startup Options</div>
<div class="a" style="left:861px;top:51px;width:31px;height:20px;background:#c75050"></div>
<svg class="a" style="left:861px;top:51px" width="31" height="20" viewBox="0 0 31 20"><path d="M11.5 6.5l8 7M19.5 6.5l-8 7" stroke="#fff" stroke-width="1.6"/></svg>
<div class="t" style="left:199px;top:93px;font-size:11px">Category</div>
<div class="a" style="left:199px;top:114px;width:221px;height:292px;background:#fff;border:1px solid #8e8f8f"></div>
<div class="a" style="left:210px;top:116px;width:1px;height:72px;border-left:1px dotted #b0b0b0"></div>
<div class="a" style="left:220px;top:147px;width:131px;height:16px;background:#ebebeb"></div>
<div class="a" style="left:211px;top:123px;width:9px;height:1px;border-top:1px dotted #b0b0b0"></div>
<div class="t" style="left:223px;top:115px;">General Options</div>
<div class="a" style="left:211px;top:139px;width:9px;height:1px;border-top:1px dotted #b0b0b0"></div>
<div class="t" style="left:223px;top:131px;">Configuration Options</div>
<div class="a" style="left:211px;top:155px;width:9px;height:1px;border-top:1px dotted #b0b0b0"></div>
<div class="t" style="left:223px;top:147px;">Startup Options</div>
<div class="a" style="left:211px;top:171px;width:9px;height:1px;border-top:1px dotted #b0b0b0"></div>
<div class="t" style="left:223px;top:163px;">Readback Options</div>
<div class="a" style="left:211px;top:187px;width:9px;height:1px;border-top:1px dotted #b0b0b0"></div>
<div class="t" style="left:223px;top:179px;">Encryption Options</div>
<div class="a" style="left:425px;top:200px;width:2px;height:95px;background:repeating-linear-gradient(#c8c8c8 0 2px,transparent 2px 4px)"></div>
<div class="a" style="left:429px;top:95px;width:454px;height:280px;background:#fff;border:1px solid #828282"></div>
<div class="a" style="left:430px;top:119px;width:452px;height:1px;background:#e8ebf0"></div>
<div class="a" style="left:528px;top:96px;width:1px;height:24px;background:#e6ebf2"></div>
<div class="a" style="left:755px;top:96px;width:1px;height:24px;background:#e6ebf2"></div>
<div class="t" style="left:440px;top:100px;">Switch Name</div>
<div class="t" style="left:598px;top:100px;">Property Name</div>
<div class="t" style="left:802px;top:100px;">Value</div>
<div class="a" style="left:430px;top:141px;width:452px;height:1px;background:#c8c8c8"></div>
<div class="a" style="left:528px;top:120px;width:1px;height:22px;background:#c8c8c8"></div>
<div class="a" style="left:755px;top:120px;width:1px;height:22px;background:#c8c8c8"></div>
<div class="t" style="left:434px;top:123px;">-g StartUpClk:</div>
<div class="t" style="left:532px;top:123px;">FPGA Start-Up Clock</div>
<div class="a" style="left:755px;top:120px;width:127px;height:22px;background:#fff;border:2px solid #a8a8a8"></div>
<div class="a" style="left:864px;top:122px;width:15px;height:18px;background:#e4e4e4"></div>
<svg class="a" style="left:864px;top:122px" width="15" height="18" viewBox="0 0 15 18"><path d="M4 7l3.5 3.5 3.5-3.5" fill="none" stroke="#505050" stroke-width="2"/></svg>
<div class="t" style="left:759px;top:123px;">JTAG Clock</div>
<div class="a" style="left:430px;top:163px;width:452px;height:1px;background:#c8c8c8"></div>
<div class="a" style="left:528px;top:142px;width:1px;height:22px;background:#c8c8c8"></div>
<div class="a" style="left:755px;top:142px;width:1px;height:22px;background:#c8c8c8"></div>
<div class="t" style="left:434px;top:145px;">-g DonePipe:</div>
<div class="t" style="left:532px;top:145px;">Enable Internal Done Pipe</div>
<div class="a" style="left:757px;top:146px;width:13px;height:13px;background:#fff;border:1px solid #555"></div>
<svg class="a" style="left:757px;top:146px" width="13" height="13" viewBox="0 0 13 13"><path d="M2.5 6.5l3 3 5-6.5" fill="none" stroke="#000" stroke-width="2"/></svg>
<div class="a" style="left:430px;top:185px;width:452px;height:1px;background:#c8c8c8"></div>
<div class="a" style="left:528px;top:164px;width:1px;height:22px;background:#c8c8c8"></div>
<div class="a" style="left:755px;top:164px;width:1px;height:22px;background:#c8c8c8"></div>
<div class="t" style="left:434px;top:167px;">-g DONE_cycle:</div>
<div class="t" style="left:532px;top:167px;">Done (Output Events)</div>
<div class="a" style="left:755px;top:164px;width:127px;height:22px;background:#fff;border:2px solid #a8a8a8"></div>
<div class="a" style="left:864px;top:166px;width:15px;height:18px;background:#e4e4e4"></div>
<svg class="a" style="left:864px;top:166px" width="15" height="18" viewBox="0 0 15 18"><path d="M4 7l3.5 3.5 3.5-3.5" fill="none" stroke="#505050" stroke-width="2"/></svg>
<div class="t" style="left:759px;top:167px;">Default (4)</div>
<div class="a" style="left:430px;top:207px;width:452px;height:1px;background:#c8c8c8"></div>
<div class="a" style="left:528px;top:186px;width:1px;height:22px;background:#c8c8c8"></div>
<div class="a" style="left:755px;top:186px;width:1px;height:22px;background:#c8c8c8"></div>
<div class="t" style="left:434px;top:189px;">-g GTS_cycle:</div>
<div class="t" style="left:532px;top:189px;">Enable Outputs (Output Events)</div>
<div class="a" style="left:755px;top:186px;width:127px;height:22px;background:#fff;border:2px solid #a8a8a8"></div>
<div class="a" style="left:864px;top:188px;width:15px;height:18px;background:#e4e4e4"></div>
<svg class="a" style="left:864px;top:188px" width="15" height="18" viewBox="0 0 15 18"><path d="M4 7l3.5 3.5 3.5-3.5" fill="none" stroke="#505050" stroke-width="2"/></svg>
<div class="t" style="left:759px;top:189px;">Default (5)</div>
<div class="a" style="left:430px;top:229px;width:452px;height:1px;background:#c8c8c8"></div>
<div class="a" style="left:528px;top:208px;width:1px;height:22px;background:#c8c8c8"></div>
<div class="a" style="left:755px;top:208px;width:1px;height:22px;background:#c8c8c8"></div>
<div class="t" style="left:434px;top:211px;">-g GWE_cycle:</div>
<div class="t" style="left:532px;top:211px;">Release Write Enable (Output Events)</div>
<div class="a" style="left:755px;top:208px;width:127px;height:22px;background:#fff;border:2px solid #a8a8a8"></div>
<div class="a" style="left:864px;top:210px;width:15px;height:18px;background:#e4e4e4"></div>
<svg class="a" style="left:864px;top:210px" width="15" height="18" viewBox="0 0 15 18"><path d="M4 7l3.5 3.5 3.5-3.5" fill="none" stroke="#505050" stroke-width="2"/></svg>
<div class="t" style="left:759px;top:211px;">Default (6)</div>
<div class="a" style="left:430px;top:251px;width:452px;height:1px;background:#c8c8c8"></div>
<div class="a" style="left:528px;top:230px;width:1px;height:22px;background:#c8c8c8"></div>
<div class="a" style="left:755px;top:230px;width:1px;height:22px;background:#c8c8c8"></div>
<div class="t" style="left:434px;top:233px;">-g LCK_cycle:</div>
<div class="t" style="left:532px;top:233px;">Wait for PLL Lock (Output Events)</div>
<div class="a" style="left:755px;top:230px;width:127px;height:22px;background:#fff;border:2px solid #a8a8a8"></div>
<div class="a" style="left:864px;top:232px;width:15px;height:18px;background:#e4e4e4"></div>
<svg class="a" style="left:864px;top:232px" width="15" height="18" viewBox="0 0 15 18"><path d="M4 7l3.5 3.5 3.5-3.5" fill="none" stroke="#505050" stroke-width="2"/></svg>
<div class="t" style="left:759px;top:233px;">No Wait</div>
<div class="a" style="left:430px;top:273px;width:452px;height:1px;background:#c8c8c8"></div>
<div class="a" style="left:528px;top:252px;width:1px;height:22px;background:#c8c8c8"></div>
<div class="a" style="left:755px;top:252px;width:1px;height:22px;background:#c8c8c8"></div>
<div class="t" style="left:434px;top:255px;">-g Match_cycle:</div>
<div class="t" style="left:532px;top:255px;">Wait for DCI Match (Output Events)</div>
<div class="a" style="left:755px;top:252px;width:127px;height:22px;background:#fff;border:2px solid #a8a8a8"></div>
<div class="a" style="left:864px;top:254px;width:15px;height:18px;background:#e4e4e4"></div>
<svg class="a" style="left:864px;top:254px" width="15" height="18" viewBox="0 0 15 18"><path d="M4 7l3.5 3.5 3.5-3.5" fill="none" stroke="#505050" stroke-width="2"/></svg>
<div class="t" style="left:759px;top:255px;">Auto</div>
<div class="t" style="left:461px;top:384px;font-size:11.5px;line-height:18px">Property display level:</div>
<div class="a" style="left:580px;top:383px;width:77px;height:20px;background:#fff;border:1px solid #a8a8a8"></div>
<div class="a" style="left:640px;top:384px;width:16px;height:18px;background:linear-gradient(#e8e8e8,#d8d8d8);border-left:1px solid #b0b0b0"></div>
<svg class="a" style="left:640px;top:384px" width="16" height="18" viewBox="0 0 16 18"><path d="M4.5 7l3.5 3.5 3.5-3.5" fill="none" stroke="#707070" stroke-width="1.6"/></svg>
<div class="t" style="left:584px;top:384px;font-size:11.4px;line-height:18px">Advanced</div>
<div class="a" style="left:665px;top:387px;width:12px;height:12px;background:#fff;border:1px solid #333"></div>
<svg class="a" style="left:665px;top:387px" width="12" height="12" viewBox="0 0 12 12"><path d="M2.5 6l2.5 3 4.5-6" fill="none" stroke="#000" stroke-width="2"/></svg>
<div class="t" style="left:684px;top:384px;font-size:11.5px;line-height:18px">Display switch names</div>
<div class="a" style="left:807px;top:382px;width:75px;height:23px;background:linear-gradient(#f2f2f2,#e4e4e4);border:1px solid #acacac;font-size:12px;line-height:21px;text-align:center;"><span style="">Default</span></div>
<div class="a" style="left:558px;top:421px;width:75px;height:23px;background:linear-gradient(#f2f2f2,#e4e4e4);border:1px solid #acacac;font-size:12px;line-height:21px;text-align:center;border-color:#3c7fb1;box-shadow:inset 0 0 0 1px #e0eefa"><span style="">OK</span></div>
<div class="a" style="left:641px;top:421px;width:75px;height:23px;background:linear-gradient(#f2f2f2,#e4e4e4);border:1px solid #acacac;font-size:12px;line-height:21px;text-align:center;"><span style="">Cancel</span></div>
<div class="a" style="left:724px;top:421px;width:75px;height:23px;background:linear-gradient(#f2f2f2,#e4e4e4);border:1px solid #acacac;font-size:12px;line-height:21px;text-align:center;background:#f4f4f4;border-color:#d0d0d0;color:#a0a0a0"><span style="">Apply</span></div>
<div class="a" style="left:807px;top:421px;width:75px;height:23px;background:linear-gradient(#f2f2f2,#e4e4e4);border:1px solid #acacac;font-size:12px;line-height:21px;text-align:center;"><span style="">Help</span></div>
<div class="a" style="left:880px;top:449px;width:2px;height:2px;background:#b8b8b8"></div>
<div class="a" style="left:883px;top:446px;width:2px;height:2px;background:#b8b8b8"></div>
<div class="a" style="left:883px;top:449px;width:2px;height:2px;background:#b8b8b8"></div>
<div class="a" style="left:886px;top:443px;width:2px;height:2px;background:#b8b8b8"></div>
<div class="a" style="left:886px;top:446px;width:2px;height:2px;background:#b8b8b8"></div>
<div class="a" style="left:886px;top:449px;width:2px;height:2px;background:#b8b8b8"></div>
</body></html>
